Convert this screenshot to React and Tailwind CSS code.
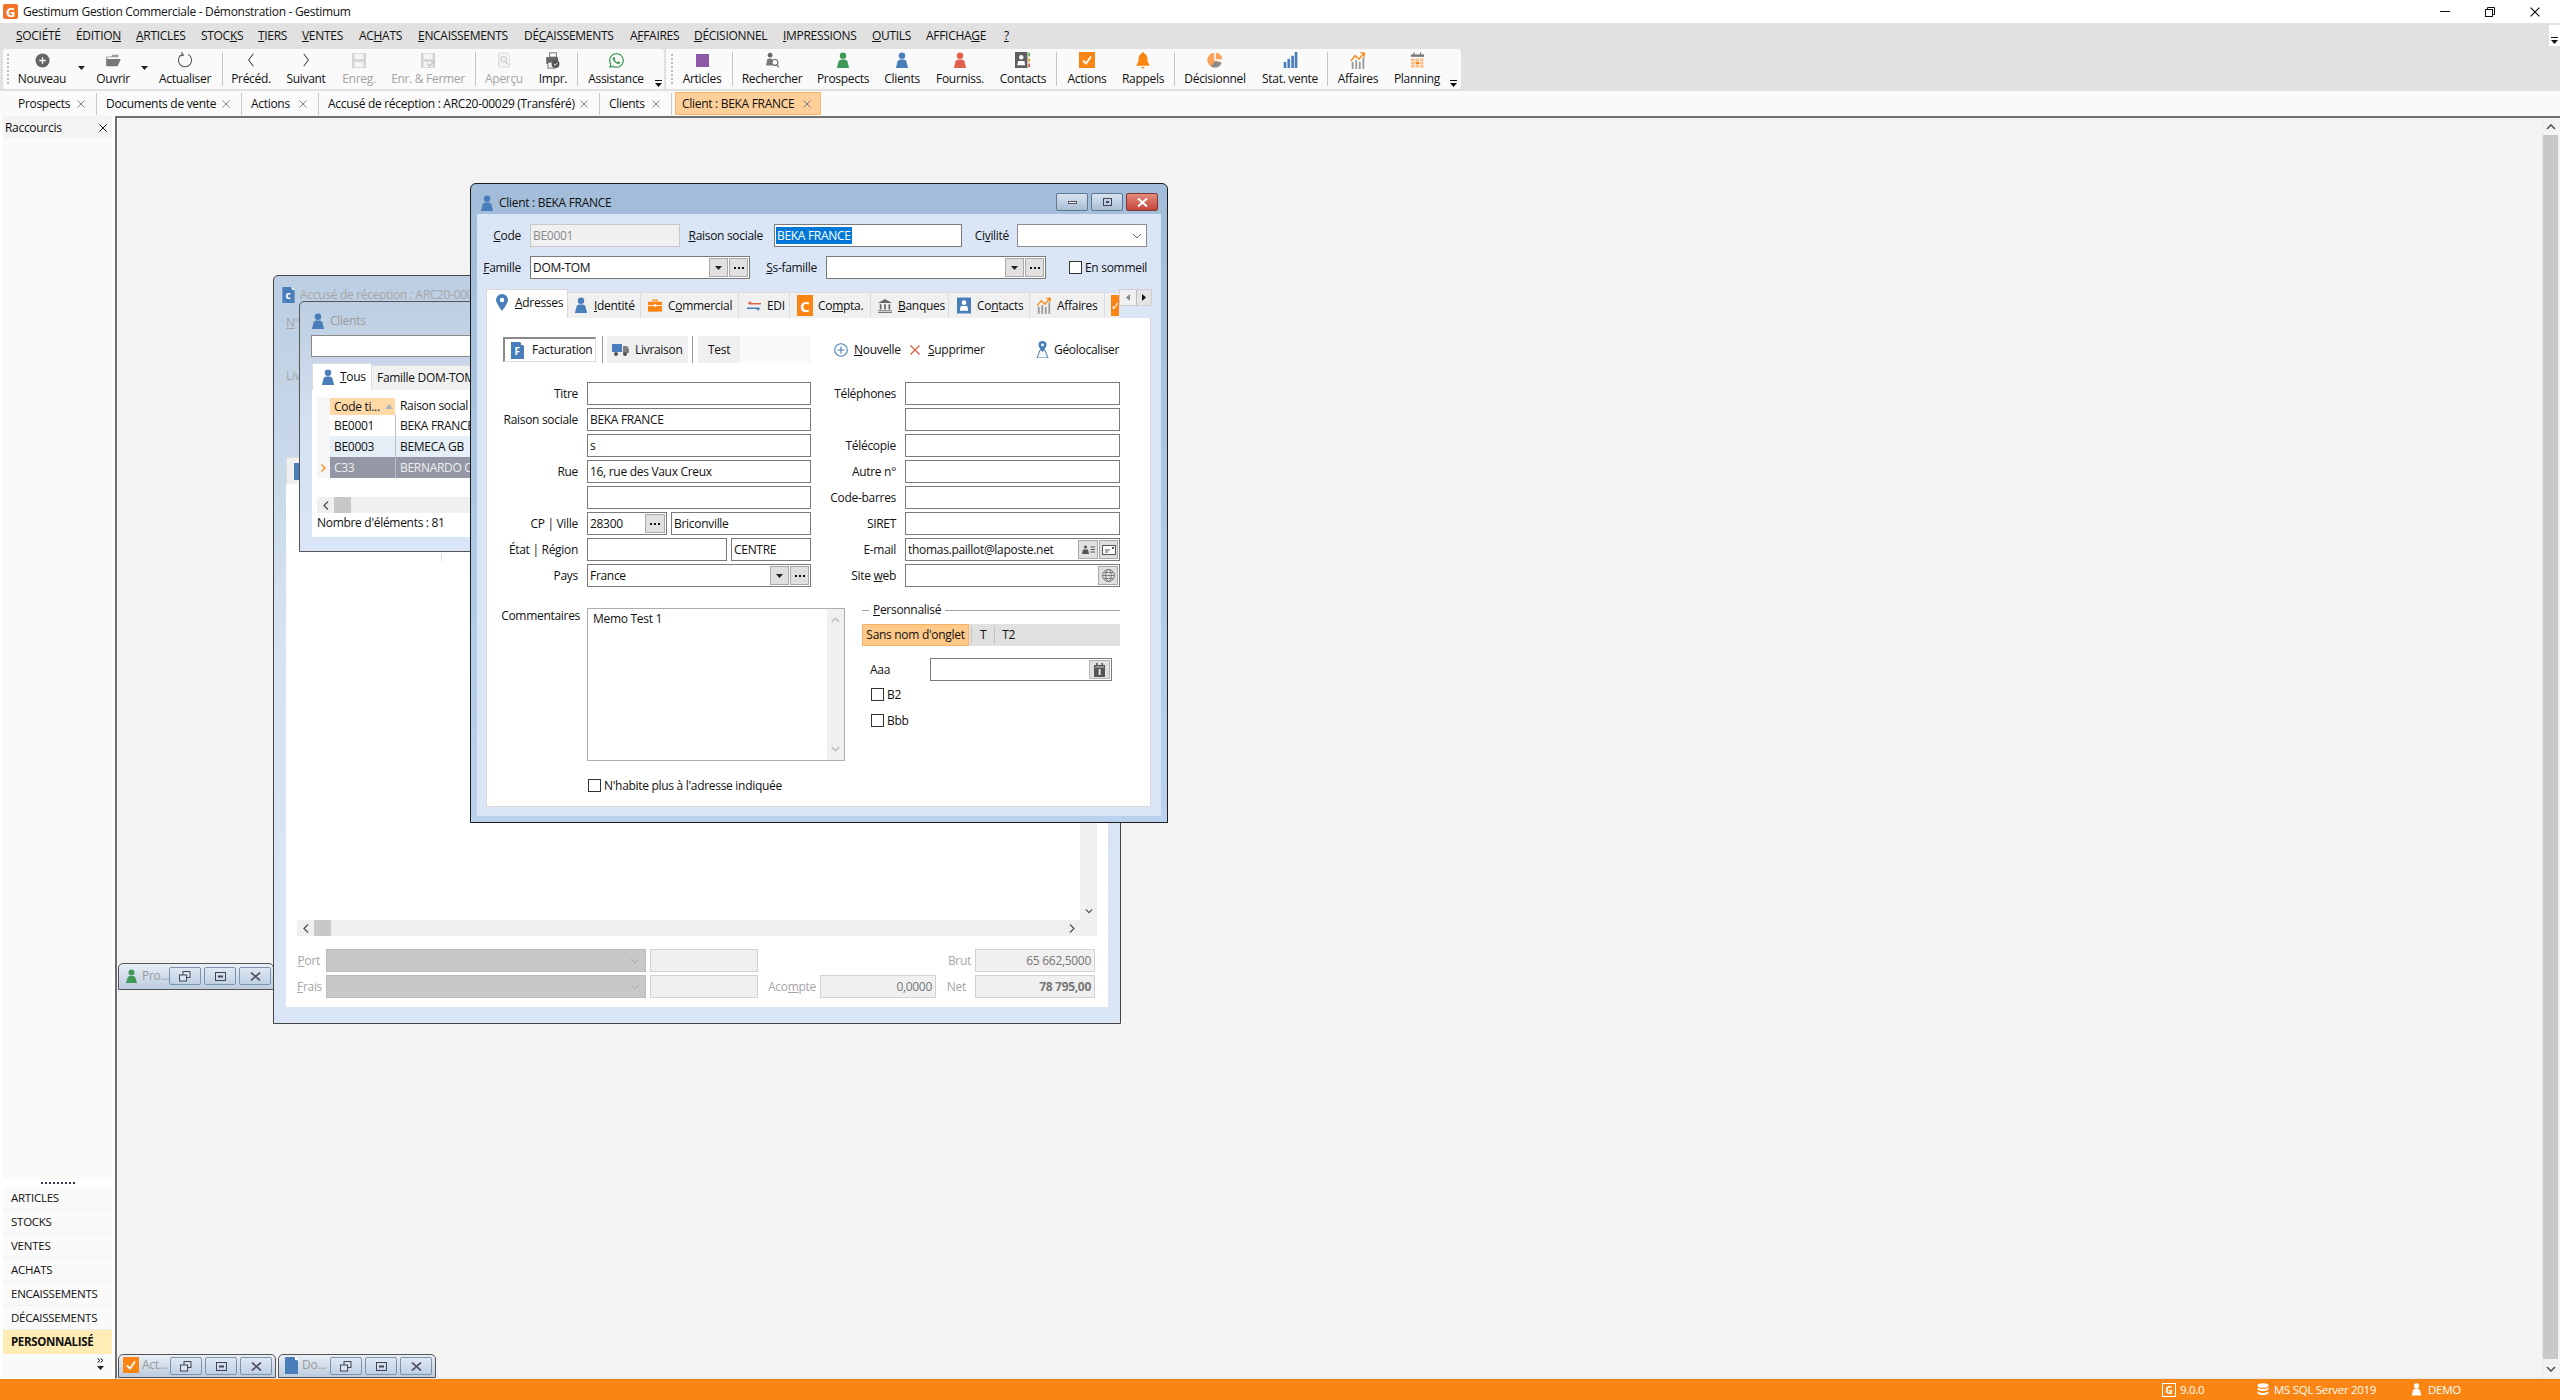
import React from "react";
import { FaWhatsapp } from "react-icons/fa";

const Person = ({ c = "#4a7ebb", s = 16 }) => (
  <svg width={s} height={s * 1.15} viewBox="0 0 16 18"><circle cx="8" cy="4" r="3.7" fill={c} /><path d="M1 18 L3 10.5 Q4 8.5 6 8.3 L10 8.3 Q12 8.5 13 10.5 L15 18 Z" fill={c} /></svg>
);
const ChevL = () => <svg width="8" height="14" viewBox="0 0 10 18"><path d="M8 1 L2 9 L8 17" fill="none" stroke="#444" strokeWidth="1.3" /></svg>;
const ChevR = () => <svg width="8" height="14" viewBox="0 0 10 18"><path d="M2 1 L8 9 L2 17" fill="none" stroke="#444" strokeWidth="1.3" /></svg>;
const Floppy = ({ check }) => (
  <svg width="16" height="15" viewBox="0 0 18 17"><path d="M1 0 H17 V17 H1 Z" fill="#d5d5d5" /><rect x="4" y="1" width="10" height="6" fill="#f4f4f4" /><rect x="4" y="10" width="10" height="6" fill="#f4f4f4" />{check && <path d="M8 12 l3 3 l6 -7" stroke="#c4c4c4" strokeWidth="1.6" fill="none" />}</svg>
);
const Plus = () => <svg width="15" height="15" viewBox="0 0 16 16"><circle cx="8" cy="8" r="7.5" fill="#666" /><path d="M8 4.5 V11.5 M4.5 8 H11.5" stroke="#fff" strokeWidth="1.4" /></svg>;
const Folder = () => <svg width="17" height="13" viewBox="0 0 20 16"><path d="M1 3 H7 L9 1 H16 V4 H1 Z" fill="#999" /><path d="M1 15 L1 4 L3 6 H19 L15 15 Z" fill="#777" /></svg>;
const Refresh = () => <svg width="16" height="16" viewBox="0 0 20 20"><path d="M6 3 A8.2 8.2 0 1 0 14 3" fill="none" stroke="#555" strokeWidth="1.3" /><path d="M5.5 0 L8 4 L3.5 5" fill="none" stroke="#555" strokeWidth="1.3" /></svg>;
const Preview = () => <svg width="14" height="16" viewBox="0 0 18 20"><path d="M2 1 H13 L16 4 V19 H2 Z" fill="#f4f4f4" stroke="#d3d3d3" /><circle cx="8.5" cy="9" r="3.5" fill="none" stroke="#c9c9c9" strokeWidth="1.3" /><path d="M11 12 L14 16" stroke="#c9c9c9" strokeWidth="1.5" /></svg>;
const Printer = () => <svg width="16" height="17" viewBox="0 0 18 20"><rect x="5" y="1" width="8" height="5" fill="none" stroke="#666" /><rect x="1" y="6" width="14" height="8" fill="#666" /><rect x="3" y="12" width="9" height="7" fill="#eee" stroke="#666" /><circle cx="12" cy="14" r="4.6" fill="#555" /><path d="M10 14 l1.6 1.6 l2.6 -3" stroke="#fff" fill="none" /></svg>;
const Purple = () => <div className="w-[13px] h-[13px] bg-[#8e5aa8]" />;
const Search = () => <svg width="15" height="16" viewBox="0 0 18 20"><circle cx="6" cy="4" r="3" fill="#666" /><path d="M1 17 L2.5 9 Q6 7 9 9 L9 17 Z" fill="#777" /><circle cx="12" cy="13" r="3.7" fill="#fff" stroke="#666" strokeWidth="1.3" /><path d="M14.5 16 L17 19" stroke="#666" strokeWidth="1.5" /></svg>;
const ContactCard = () => <svg width="16" height="16" viewBox="0 0 18 18"><rect x="0" y="0" width="14" height="18" fill="#5f5f5f" /><circle cx="7" cy="6" r="2.5" fill="#fff" /><path d="M2.5 15 L3.5 10 H10.5 L11.5 15 Z" fill="#fff" /><rect x="15" y="1" width="2" height="4" fill="#4caf50" /><rect x="15" y="7" width="2" height="4" fill="#e0a030" /><rect x="15" y="13" width="2" height="4" fill="#d9534f" /></svg>;
const ActionBox = ({ s = 16 }) => <svg width={s} height={s} viewBox="0 0 16 16"><rect width="16" height="16" fill="#fb8513" /><path d="M4 8.5 L7 11.5 L12 4.5" stroke="#fff" strokeWidth="1.8" fill="none" /></svg>;
const Bell = () => <svg width="14" height="17" viewBox="0 0 17 21"><path d="M8.5 0 Q10 0 10 2 Q14 3.5 14 9 Q14 13 16.5 16 V17 H.5 V16 Q3 13 3 9 Q3 3.5 7 2 Q7 0 8.5 0Z" fill="#fb8513" /><path d="M6.5 18.5 H10.5 Q10 20.5 8.5 20.5 Q7 20.5 6.5 18.5Z" fill="#fb8513" /></svg>;
const Pie = () => <svg width="16" height="16" viewBox="0 0 20 20"><path d="M9 1 A9 9 0 1 0 18 12.5 L9 10.5 Z" fill="#f7a35c" /><path d="M11 0.5 A9 9 0 0 1 19 9 L11 9 Z" fill="#f7a35c" /><path d="M10 11.5 L18.5 13.3 A9 9 0 0 1 5 18 Z" fill="#8c8c8c" /></svg>;
const Bars = () => <svg width="15" height="16" viewBox="0 0 18 21"><rect x="0" y="13" width="3.5" height="8" fill="#4a7ebb" /><rect x="5" y="9" width="3.5" height="12" fill="#4a7ebb" /><rect x="10" y="5" width="3.5" height="16" fill="#4a7ebb" /><rect x="14.5" y="0" width="3.5" height="21" fill="#4a7ebb" /></svg>;
const Trend = () => <svg width="16" height="17" viewBox="0 0 16 19"><rect x="1" y="11" width="2" height="8" fill="#999" /><rect x="5" y="9" width="2" height="10" fill="#999" /><rect x="9" y="11" width="2" height="8" fill="#999" /><rect x="13" y="6" width="2" height="13" fill="#999" /><path d="M0 10 L5 4 L9 8 L14.5 1.5 M10.5 1 H15 V5.5" stroke="#fb8513" strokeWidth="1.5" fill="none" /></svg>;
const Planning = () => <svg width="15" height="17" viewBox="0 0 16 21"><path d="M0 3 H16 V6 H0 Z" fill="#777" /><rect x="3" y="0.5" width="1.5" height="4" fill="#777" /><rect x="11" y="0.5" width="1.5" height="4" fill="#777" />
  {[8, 12, 16].map((y) => [0, 5.5, 11].map((x) => <rect key={x + "-" + y} x={x} y={y} width="4.5" height="3.3" fill={y === 12 && x === 5.5 ? "#fb8513" : "#fbc18c"} />))}</svg>;
const Pin = () => <svg width="12" height="17" viewBox="0 0 12 17"><path d="M6 0 A6 6 0 0 1 12 6 Q12 9 6 17 Q0 9 0 6 A6 6 0 0 1 6 0Z" fill="#4a7ebb" /><circle cx="6" cy="6" r="2.2" fill="#fff" /></svg>;
const Briefcase = () => <svg width="17" height="15" viewBox="0 0 17 15"><path d="M6 3 V1 H11 V3" stroke="#fb8513" fill="none" strokeWidth="1.3" /><rect y="3" width="17" height="12" fill="#fb8513" /><rect y="7" width="17" height="1" fill="#fff" /><rect x="7" y="6" width="3" height="3" fill="#fff" /></svg>;
const Edi = () => <svg width="15" height="10" viewBox="0 0 15 10"><path d="M15 2.5 H2 M4 0.5 L1.5 2.5" stroke="#e0604c" strokeWidth="1.6" fill="none" /><path d="M0 7.5 H13 M11 9.5 L13.5 7.5" stroke="#4a7ebb" strokeWidth="1.6" fill="none" /></svg>;
const Bank = () => <svg width="16" height="16" viewBox="0 0 16 16"><path d="M8 0 L16 4.5 H0 Z" fill="#666" /><rect x="2" y="6" width="2" height="6" fill="#666" /><rect x="7" y="6" width="2" height="6" fill="#666" /><rect x="12" y="6" width="2" height="6" fill="#666" /><rect y="13" width="16" height="1" fill="#666" /><rect y="15" width="16" height="1" fill="#666" /></svg>;
const BlueContact = () => <svg width="15" height="17" viewBox="0 0 15 17"><rect width="15" height="17" fill="#4a7ebb" /><circle cx="7.5" cy="5.5" r="2.5" fill="#fff" /><path d="M3 14 L4 9 H11 L12 14 Z" fill="#fff" /></svg>;
const Doc = ({ t, w = 13, h = 17, fs = 10 }) => <svg width={w} height={h} viewBox="0 0 13 17"><path d="M0 0 H9 L13 4 V17 H0 Z" fill="#4a7ebb" /><path d="M10 0 L13 3 H10 Z" fill="#fff" />{t && <text x="6" y="13" fontSize={fs} fill="#fff" textAnchor="middle" fontWeight="700">{t}</text>}</svg>;
const Truck = () => <svg width="17" height="13" viewBox="0 0 17 13"><rect y="1" width="10" height="8" fill="#4a7ebb" /><path d="M11 3 H15 L17 6 V10 H11 Z" fill="#7f7f7f" /><circle cx="4" cy="11" r="2" fill="#555" /><circle cx="13" cy="11" r="2" fill="#555" /></svg>;
const PlusCircle = () => <svg width="14" height="14" viewBox="0 0 14 14"><circle cx="7" cy="7" r="6.3" fill="none" stroke="#4a7ebb" strokeWidth="1.1" /><path d="M7 3.5 V10.5 M3.5 7 H10.5" stroke="#4a7ebb" strokeWidth="1.1" /></svg>;
const RedX = () => <svg width="10" height="10" viewBox="0 0 10 10"><path d="M0.5 0.5 L9.5 9.5 M9.5 0.5 L0.5 9.5" stroke="#e0604c" strokeWidth="1.4" /></svg>;
const Geo = () => <svg width="15" height="17" viewBox="0 0 15 17"><path d="M2 17 L5 9 H10 L13 17 Z" fill="#f5f8fc" stroke="#4a7ebb" /><path d="M7.5 0 A4 4 0 0 1 11.5 4 Q11.5 6 7.5 11 Q3.5 6 3.5 4 A4 4 0 0 1 7.5 0Z" fill="#4a7ebb" /><circle cx="7.5" cy="4" r="1.4" fill="#fff" /></svg>;
const DownTri = ({ c = "#222" }) => <svg width="7" height="4" viewBox="0 0 7 4"><path d="M0 0 H7 L3.5 4 Z" fill={c} /></svg>;
const TinyOver = () => <svg width="7" height="7" viewBox="0 0 7 7"><rect width="7" height="1" fill="#111" /><path d="M0 3 H7 L3.5 7 Z" fill="#111" /></svg>;
const Cv = ({ c = "#666", d = "M1 1 L5 5 L9 1", w = 10, h = 6, sw = 1 }) => <svg width={w} height={h} viewBox="0 0 10 6"><path d={d} fill="none" stroke={c} strokeWidth={sw} /></svg>;
const CloseX = ({ c = "#8a8a8a", s = 8 }) => <svg width={s} height={s} viewBox="0 0 8 8"><path d="M0.5 0.5 L7.5 7.5 M7.5 0.5 L0.5 7.5" stroke={c} strokeWidth="1" /></svg>;

const Dots = () => <span className="flex gap-[2px]"><span className="w-[2px] h-[2px] bg-[#111]" /><span className="w-[2px] h-[2px] bg-[#111]" /><span className="w-[2px] h-[2px] bg-[#111]" /></span>;
const MiniBtn = ({ w = 19, h = 19, children }) => <span className="flex items-center justify-center bg-[#e0e0e0] border border-[#a9a9a9] shrink-0" style={{ width: w, height: h }}>{children}</span>;
const Grip = () => <div className="w-[2px] h-[30px] mx-[2px] self-center border-l-2 border-dotted border-[#bdbdbd]" />;

const menu = [
  [60, <><u>S</u>OCIÉTÉ</>], [60, <>ÉDITIO<u>N</u></>], [65, <><u>A</u>RTICLES</>], [57, <>STOC<u>K</u>S</>], [44, <><u>T</u>IERS</>], [57, <><u>V</u>ENTES</>], [59, <>AC<u>H</u>ATS</>], [106, <><u>E</u>NCAISSEMENTS</>], [106, <>DÉ<u>C</u>AISSEMENTS</>], [64, <>A<u>F</u>FAIRES</>], [89, <><u>D</u>ÉCISIONNEL</>], [89, <><u>I</u>MPRESSIONS</>], [54, <><u>O</u>UTILS</>], [78, <>AFFICHA<u>G</u>E</>], [20, <u>?</u>],
];

const TB = ({ w, label, icon, off }) => (
  <div className={`flex flex-col items-center h-full shrink-0 ${off ? "text-[#a3a3a3]" : "text-[#111]"}`} style={{ width: w }}>
    <div className="h-[22px] shrink-0 flex items-center justify-center">{icon}</div>
    <div className="leading-[16px] whitespace-nowrap">{label}</div>
  </div>
);
const Arrow = ({ w }) => <div className="flex items-center justify-center h-full shrink-0 pb-[2px]" style={{ width: w }}><DownTri /></div>;
const Sep = ({ w }) => <div className="flex justify-center items-center h-full shrink-0" style={{ width: w }}><div className="w-[1px] h-[34px] bg-[#c4c4c4]" /></div>;
const Over = ({ w }) => <div className="flex items-end justify-center h-full shrink-0 pb-[2px]" style={{ width: w }}><TinyOver /></div>;

const DocTab = ({ w, label }) => (
  <div className="flex items-center h-full shrink-0" style={{ width: w }}>
    <span className="whitespace-nowrap">{label}</span>
    <span className="ml-auto mr-[11px]"><CloseX /></span>
  </div>
);
const TabSep = () => <div className="w-[1px] h-[22px] bg-[#c9c9c9] mr-[9px] shrink-0" />;

const MinBtns = () => (
  <div className="flex gap-[3px] ml-auto">
    <span className="w-[32px] h-[18px] flex items-center justify-center bg-gradient-to-b from-[#dfe8f3] to-[#bfd0e4] border border-[#7f93ab] rounded-[2px]"><svg width="12" height="11" viewBox="0 0 12 11"><rect x="4" y=".5" width="7" height="6" fill="none" stroke="#445" /><rect x=".5" y="4" width="7" height="6" fill="#dbe5f1" stroke="#445" /></svg></span>
    <span className="w-[32px] h-[18px] flex items-center justify-center bg-gradient-to-b from-[#dfe8f3] to-[#bfd0e4] border border-[#7f93ab] rounded-[2px]"><svg width="11" height="9" viewBox="0 0 11 9"><rect x=".5" y=".5" width="10" height="8" fill="none" stroke="#445" /><rect x="3" y="3.5" width="5" height="2" fill="#445" /></svg></span>
    <span className="w-[32px] h-[18px] flex items-center justify-center bg-gradient-to-b from-[#dfe8f3] to-[#bfd0e4] border border-[#7f93ab] rounded-[2px]"><svg width="11" height="9" viewBox="0 0 11 9"><path d="M1 0.5 L10 8.5 M10 0.5 L1 8.5" stroke="#556" strokeWidth="1.7" /></svg></span>
  </div>
);
const MinWin = ({ className, icon, label }) => (
  <div className={`absolute h-[27px] rounded-t-[5px] border border-[#555] bg-gradient-to-b from-[#e8eef6] to-[#bccddf] flex items-center pl-[4px] pr-[3px] pt-[2px] pb-[3px] ${className}`}>
    <span className="w-[16px] flex justify-center shrink-0">{icon}</span>
    <span className="ml-[3px] text-[#9a9a9a] whitespace-nowrap">{label}</span>
    <MinBtns />
  </div>
);

const Fld = ({ w, children, cls = "" }) => (
  <div className={`h-[23px] border border-[#7a7a7a] bg-white flex items-center shrink-0 text-[#111] ${cls}`} style={{ width: w }}>{children}</div>
);
const Txt = ({ children }) => <span className="pl-[2px] whitespace-nowrap leading-[17px]">{children}</span>;
const Lbl = ({ w, pr, children, cls = "" }) => <div className={`text-right shrink-0 text-[#111] whitespace-nowrap ${cls}`} style={{ width: w, paddingRight: pr }}>{children}</div>;

const Tab = ({ w, pl, icon, children }) => (
  <div className="h-[26px] shrink-0 bg-[#f0f0f0] border-t border-r border-[#dcdcdc] flex items-center text-[#111] overflow-hidden" style={{ width: w, paddingLeft: pl }}>
    <span className="w-[14px] flex justify-center shrink-0">{icon}</span>
    <span className="ml-[6px] whitespace-nowrap">{children}</span>
  </div>
);
const Check = ({ label, cls = "" }) => (
  <div className={`flex items-center ${cls}`}>
    <span className="w-[13px] h-[13px] border border-[#333] bg-white shrink-0" />
    <span className="ml-[3px] whitespace-nowrap text-[#111]">{label}</span>
  </div>
);

const leftRows = [
  ["Titre"], ["Raison sociale", "BEKA FRANCE"], ["", "s"], ["Rue", "16, rue des Vaux Creux"], [""],
];
const rightRows = ["Téléphones", "", "Télécopie", "Autre n°", "Code-barres", "SIRET"];
const sideItems = ["ARTICLES", "STOCKS", "VENTES", "ACHATS", "ENCAISSEMENTS", "DÉCAISSEMENTS"];

function ClientWindow() {
  return (
    <div className="absolute left-[353px] top-[65px] w-[698px] h-[640px] border border-[#1c1c1c] rounded-t-[6px] overflow-hidden bg-gradient-to-b from-[#a2bcd9] to-[#bad2ed] flex flex-col px-[6px] pb-[6px]">
      <div className="h-[30px] shrink-0 flex items-center pt-[8px]">
        <span className="ml-[2px] w-[16px] flex justify-center"><Person s={14} /></span>
        <span className="ml-[4px] text-[#111] whitespace-nowrap">Client : BEKA FRANCE</span>
        <div className="ml-auto flex gap-[3px] mr-[3px] mb-[2px]">
          <span className="w-[32px] h-[18px] rounded-[2px] border border-[#5f7590] bg-gradient-to-b from-[#d9e4f0] to-[#a9bdd4] flex items-center justify-center"><span className="w-[9px] h-[3px] bg-white border border-[#556]" /></span>
          <span className="w-[32px] h-[18px] rounded-[2px] border border-[#5f7590] bg-gradient-to-b from-[#d9e4f0] to-[#a9bdd4] flex items-center justify-center"><span className="w-[9px] h-[8px] border border-[#445] flex items-center justify-center"><span className="w-[3px] h-[2px] bg-[#445]" /></span></span>
          <span className="w-[32px] h-[18px] rounded-[2px] border border-[#7a3a33] bg-gradient-to-b from-[#e58a7d] to-[#c2443a] flex items-center justify-center"><svg width="11" height="9" viewBox="0 0 11 9"><path d="M1 0.5 L10 8.5 M10 0.5 L1 8.5" stroke="#fff" strokeWidth="2" /></svg></span>
        </div>
      </div>
      <div className="flex-1 bg-[#dae6f6] flex flex-col pt-[10px]">
        <div className="flex items-center h-[23px]">
          <Lbl w={53} pr={9}><u>C</u>ode</Lbl>
          <Fld w={150} cls="!bg-[#f0f0f0] !border-[#c8c8c8] !text-[#8a8a8a]"><Txt>BE0001</Txt></Fld>
          <Lbl w={94} pr={11}><u>R</u>aison sociale</Lbl>
          <Fld w={188}><span className="ml-[1px] bg-[#0078d7] text-white px-[1px] whitespace-nowrap leading-[17px]">BEKA FRANCE</span></Fld>
          <Lbl w={55} pr={8}>Ci<u>v</u>ilité</Lbl>
          <Fld w={130} cls="!border-[#8c8c8c] justify-end pr-[4px]"><Cv /></Fld>
        </div>
        <div className="flex items-center h-[23px] mt-[9px]">
          <Lbl w={53} pr={9}><u>F</u>amille</Lbl>
          <Fld w={220} cls="pr-[1px] gap-[1px]"><Txt>DOM-TOM</Txt><span className="ml-auto" /><MiniBtn><DownTri /></MiniBtn><MiniBtn><Dots /></MiniBtn></Fld>
          <Lbl w={76} pr={9}><u>S</u>s-famille</Lbl>
          <Fld w={220} cls="pr-[1px] gap-[1px]"><span className="ml-auto" /><MiniBtn><DownTri /></MiniBtn><MiniBtn><Dots /></MiniBtn></Fld>
          <Check cls="ml-[23px]" label="En sommeil" />
        </div>
        <div className="flex items-end h-[29px] mt-[10px] ml-[9px] relative z-10">
          <div className="w-[82px] h-[29px] shrink-0 bg-white border-t border-l border-r border-[#d9d9d9] flex items-center pl-[8px] pb-[3px] text-[#111]">
            <span className="w-[14px] flex justify-center"><Pin /></span><span className="ml-[6px]"><u>A</u>dresses</span>
          </div>
          <Tab w={73} pl={6} icon={<Person s={14} />}><u>I</u>dentité</Tab>
          <Tab w={98} pl={7} icon={<Briefcase />}>C<u>o</u>mmercial</Tab>
          <Tab w={51} pl={8} icon={<Edi />}>EDI</Tab>
          <Tab w={81} pl={8} icon={<span className="w-[16px] h-[21px] bg-[#fb8513] text-white text-[15px] font-bold flex items-center justify-center shrink-0">C</span>}>Co<u>m</u>pta.</Tab>
          <Tab w={78} pl={7} icon={<Bank />}><u>B</u>anques</Tab>
          <Tab w={81} pl={8} icon={<BlueContact />}>Co<u>n</u>tacts</Tab>
          <Tab w={75} pl={7} icon={<Trend />}>Affaires</Tab>
          <div className="w-[14px] h-[26px] shrink-0 bg-[#f0f0f0] border-t border-[#dcdcdc] pl-[6px] flex items-center overflow-hidden"><span className="w-[9px] h-[21px] bg-[#fb8513] flex items-center text-white text-[11px]">✓</span></div>
          <div className="absolute left-[633px] top-0 w-[33px] h-[17px] flex bg-[#f0f0f0] border border-[#cfcfcf]">
            <span className="w-[16px] flex items-center justify-center"><svg width="4" height="7" viewBox="0 0 4 7"><path d="M4 0 V7 L0 3.5 Z" fill="#888" /></svg></span>
            <span className="flex-1 flex items-center justify-center bg-[#e4e4e4] border-l border-[#bbb]"><svg width="4" height="7" viewBox="0 0 4 7"><path d="M0 0 V7 L4 3.5 Z" fill="#111" /></svg></span>
          </div>
        </div>
        <div className="ml-[9px] w-[665px] h-[489px] bg-white border border-t-0 border-[#d9d9d9] shrink-0 flex flex-col">
          <div className="flex items-center h-[27px] mt-[18px] ml-[16px]">
            <div className="w-[93px] h-[25px] border-t-2 border-l-2 border-[#8a8a8a] border-r border-b border-r-[#ddd] border-b-[#ddd] flex items-center pl-[6px] text-[#111]"><Doc t="F" /><span className="ml-[8px]">Facturation</span></div>
            <div className="w-[1px] h-[27px] bg-[#9a9a9a] ml-[6px]" />
            <div className="w-[81px] h-[27px] bg-[#f0f0f0] ml-[4px] flex items-center pl-[5px] text-[#111]"><Truck /><span className="ml-[6px]">Livraison</span></div>
            <div className="w-[1px] h-[27px] bg-[#9a9a9a] ml-[4px]" />
            <div className="w-[42px] h-[27px] bg-[#f0f0f0] ml-[5px] flex items-center pl-[10px] text-[#111]">Test</div>
            <div className="w-[71px] h-[27px] bg-[#f9f9f9]" />
            <span className="ml-[23px] w-[76px] shrink-0 flex items-center"><PlusCircle /><span className="ml-[6px] text-[#111]"><u>N</u>ouvelle</span></span>
            <span className="w-[125px] shrink-0 flex items-center"><RedX /><span className="ml-[8px] text-[#111]"><u>S</u>upprimer</span></span>
            <span className="flex items-center"><Geo /><span className="ml-[4px] text-[#111]">Géolocaliser</span></span>
          </div>
          <div className="flex mt-[19px]">
            <div className="w-[324px] flex flex-col gap-[3px] shrink-0">
              {leftRows.map(([l, v], i) => (
                <div key={i} className="flex items-center"><Lbl w={91} pr={0}>{l}</Lbl><span className="w-[9px]" /><Fld w={224}>{v && <Txt>{v}</Txt>}</Fld></div>
              ))}
              <div className="flex items-center"><Lbl w={91} pr={0}>CP | Ville</Lbl><span className="w-[9px]" />
                <Fld w={80} cls="pr-[1px]"><Txt>28300</Txt><span className="ml-auto"><MiniBtn w={20}><Dots /></MiniBtn></span></Fld>
                <span className="w-[4px]" /><Fld w={140}><Txt>Briconville</Txt></Fld></div>
              <div className="flex items-center"><Lbl w={91} pr={0}>État | Région</Lbl><span className="w-[9px]" />
                <Fld w={140} /><span className="w-[4px]" /><Fld w={80}><Txt>CENTRE</Txt></Fld></div>
              <div className="flex items-center"><Lbl w={91} pr={0}>Pays</Lbl><span className="w-[9px]" />
                <Fld w={224} cls="pr-[1px] gap-[1px]"><Txt>France</Txt><span className="ml-auto" /><MiniBtn><DownTri /></MiniBtn><MiniBtn><Dots /></MiniBtn></Fld></div>
            </div>
            <div className="flex flex-col gap-[3px]">
              {rightRows.map((l, i) => (
                <div key={i} className="flex items-center"><Lbl w={85} pr={0}>{l}</Lbl><span className="w-[9px]" /><Fld w={215} /></div>
              ))}
              <div className="flex items-center"><Lbl w={85} pr={0}>E-mail</Lbl><span className="w-[9px]" />
                <Fld w={215} cls="pr-[1px] gap-[1px]"><Txt>thomas.paillot@laposte.net</Txt><span className="ml-auto" />
                  <MiniBtn w={20}><svg width="13" height="9" viewBox="0 0 13 9"><circle cx="3.5" cy="2" r="1.6" fill="#555" /><path d="M0 9 L1 4.5 H6 L7 9Z" fill="#555" /><path d="M8.5 2 H13 M8.5 4.5 H13 M8.5 7 H13" stroke="#555" /></svg></MiniBtn>
                  <MiniBtn w={19}><svg width="14" height="10" viewBox="0 0 14 10"><rect x=".5" y=".5" width="13" height="9" fill="#fff" stroke="#555" /><path d="M3 5 H8 M3 7 H6" stroke="#555" /><rect x="10" y="2" width="2" height="2" fill="#555" /></svg></MiniBtn></Fld></div>
              <div className="flex items-center"><Lbl w={85} pr={0}>Site <u>w</u>eb</Lbl><span className="w-[9px]" />
                <Fld w={215} cls="pr-[1px]"><span className="ml-auto"><MiniBtn w={20}><svg width="13" height="13" viewBox="0 0 13 13" fill="none" stroke="#666" strokeWidth=".8"><circle cx="6.5" cy="6.5" r="6" /><ellipse cx="6.5" cy="6.5" rx="2.8" ry="6" /><path d="M.5 6.5 H12.5 M1.5 3.5 H11.5 M1.5 9.5 H11.5" /></svg></MiniBtn></span></Fld></div>
            </div>
          </div>
          <div className="flex mt-[16px]">
            <div className="flex pt-[5px] shrink-0">
              <Lbl w={93} pr={0} cls="pt-[0px]">Commentaires</Lbl>
              <span className="w-[7px]" />
              <div className="w-[258px] h-[153px] border border-[#adadad] bg-white flex text-[#111]">
                <span className="flex-1 pl-[5px] pt-[2px]">Memo Test 1</span>
                <div className="w-[17px] bg-[#f0f0f0] flex flex-col items-center justify-between py-[8px]"><Cv c="#bbb" d="M1 5 L5 1 L9 5" sw={1.5} w={9} /><Cv c="#bbb" sw={1.5} w={9} /></div>
              </div>
            </div>
            <div className="ml-[17px] w-[258px] flex flex-col">
              <div className="h-[14px] flex items-center"><span className="w-[7px] h-[1px] bg-[#a0a0a0]" /><span className="mx-[4px] text-[#111]"><u>P</u>ersonnalisé</span><span className="flex-1 h-[1px] bg-[#a0a0a0]" /></div>
              <div className="h-[22px] mt-[7px] bg-[#e0e0e0] flex items-center text-[#111]">
                <span className="w-[107px] h-[22px] bg-[#ffc98a] border border-[#f7b26a] flex items-center justify-center whitespace-nowrap">Sans nom d'onglet</span>
                <span className="w-[1px] h-[18px] bg-[#c4c4c4] ml-[2px]" /><span className="ml-[8px]">T</span>
                <span className="w-[1px] h-[18px] bg-[#c4c4c4] ml-[8px]" /><span className="ml-[7px]">T2</span>
              </div>
              <div className="flex items-center mt-[12px] h-[23px] pl-[8px] text-[#111]">
                <span className="w-[60px]">Aaa</span>
                <Fld w={182} cls="justify-end pr-[1px]"><span className="w-[21px] h-[19px] bg-[#e0e0e0] border border-[#b4b4b4] flex items-center justify-center"><svg width="11" height="14" viewBox="0 0 11 14"><rect y="2" width="11" height="12" fill="#555" /><rect x="2" y="0" width="1.5" height="3" fill="#555" /><rect x="7.5" y="0" width="1.5" height="3" fill="#555" /><rect x="1" y="3.6" width="9" height=".8" fill="#eee" /><rect x="4.7" y="6" width="1.8" height="6" fill="#eee" /></svg></span></Fld>
              </div>
              <Check cls="ml-[9px] mt-[7px] h-[13px]" label="B2" />
              <Check cls="ml-[9px] mt-[13px] h-[13px]" label="Bbb" />
            </div>
          </div>
          <Check cls="ml-[101px] mt-[18px] h-[13px]" label="N'habite plus à l'adresse indiquée" />
        </div>
      </div>
    </div>
  );
}

function ClientsWindow() {
  return (
    <div className="absolute left-[182px] top-[183px] w-[400px] h-[251px] border border-[#555] rounded-t-[5px] overflow-hidden bg-gradient-to-b from-[#bccee2] via-[#d4e1f1] to-[#dae6f5] flex flex-col">
      <div className="h-[28px] flex items-center shrink-0 pl-[11px] pt-[10px]"><Person s={14} /><span className="ml-[5px] text-[#9a9a9a]">Clients</span></div>
      <div className="ml-[11px] mt-[5px] h-[22px] w-[300px] bg-white border border-[#8a8a8a] shrink-0" />
      <div className="flex mt-[6px] ml-[12px] h-[27px] shrink-0">
        <div className="w-[60px] h-[27px] bg-white border-t border-l border-r border-[#ddd] flex items-center pl-[8px] text-[#111]"><Person s={14} /><span className="ml-[5px]"><u>T</u>ous</span></div>
        <div className="h-[25px] mt-[2px] w-[200px] bg-[#f0f0f0] border-t border-[#ddd] flex items-center pl-[5px] text-[#111] whitespace-nowrap">Famille DOM-TOM</div>
      </div>
      <div className="ml-[12px] w-[360px] h-[147px] bg-white shrink-0 pl-[5px] pt-[8px] flex flex-col text-[#111]">
        <div className="flex h-[17px]">
          <span className="w-[13px] bg-[#f6f6f6]" />
          <span className="w-[65px] bg-[#ffd9a6] flex items-center pl-[4px] whitespace-nowrap">Code ti...<svg className="ml-auto mr-[2px]" width="8" height="5" viewBox="0 0 8 5"><path d="M4 0 L8 5 H0Z" fill="#b3b3b3" /></svg></span>
          <span className="pl-[5px] whitespace-nowrap">Raison social</span>
        </div>
        {[["BE0001", "BEKA FRANCE", "bg-white text-[#111]"], ["BE0003", "BEMECA GB", "bg-[#e6eef7] text-[#111]"], ["C33", "BERNARDO C", "bg-[#9497a6] text-[#eee]"]].map(([a, b, c], i) => (
          <div key={a} className="flex h-[21px] items-center">
            <span className="w-[13px] h-full bg-[#f6f6f6] flex items-center justify-center">{i === 2 && <svg width="5" height="8" viewBox="0 0 5 8"><path d="M.5 .5 L4 4 L.5 7.5" fill="none" stroke="#fb8513" strokeWidth="1.3" /></svg>}</span>
            <span className={`w-[66px] h-full flex items-center pl-[4px] border-r border-[#bdbdbd] ${c}`}>{a}</span>
            <span className={`flex-1 h-full flex items-center pl-[4px] whitespace-nowrap ${c}`}>{b}</span>
          </div>
        ))}
        <div className="h-[16px] mt-[19px] bg-[#f0f0f0] flex items-center">
          <span className="w-[17px] flex justify-center"><svg width="6" height="9" viewBox="0 0 6 9"><path d="M5 .5 L1 4.5 L5 8.5" fill="none" stroke="#555" strokeWidth="1.4" /></svg></span>
          <span className="w-[17px] h-full bg-[#c8c8c8]" />
        </div>
        <div className="mt-[2px] whitespace-nowrap">Nombre d'éléments : 81</div>
      </div>
    </div>
  );
}

function AccuseWindow() {
  const grey = "text-[#a6a6a6]";
  const Box = ({ w, v, b }) => (
    <div className={`h-[23px] bg-[#f0f0f0] border border-[#d2d2d2] shrink-0 flex items-center justify-end pr-[3px] text-[#777] ${b ? "font-bold" : ""}`} style={{ width: w }}>{v}</div>
  );
  const Sel = () => <div className="w-[320px] h-[23px] bg-[#c8c8c8] border border-[#bcbcbc] shrink-0 flex items-center justify-end pr-[5px]"><Cv c="#a9a9a9" /></div>;
  return (
    <div className="absolute left-[156px] top-[157px] w-[848px] h-[749px] border border-[#444] rounded-t-[5px] overflow-hidden bg-gradient-to-b from-[#bccee2] via-[#d6e3f2] to-[#dae6f5] flex flex-col px-[12px] pb-[16px]">
      <div className="h-[26px] shrink-0 flex items-center -ml-[4px] pt-[12px]"><Doc t="c" w={13} h={16} fs={11} /><span className={`ml-[5px] ${grey} whitespace-nowrap`}>Accusé de réception : ARC20-00029 (Transféré)</span></div>
      <div className={`mt-[13px] h-[18px] shrink-0 ${grey}`}><u>N</u>°</div>
      <div className={`mt-[35px] h-[18px] shrink-0 ${grey}`}>Liv</div>
      <div className="mt-[71px] h-[27px] w-[80px] bg-[#f0f0f0] border-t border-l border-[#ddd] shrink-0 flex items-center pl-[7px]"><span className="w-[7px] h-[17px] bg-[#4a7ebb]" /></div>
      <div className="flex-1 bg-white flex flex-col px-[11px]">
        <div className="flex-1 flex">
          <div className="flex-1">
            <div className="flex mt-[69px] h-[8px]"><span className="ml-[79px] w-[66px] border-r border-[#d9d9d9]" /><span className="w-[66px] border-r border-[#d9d9d9]" /></div>
          </div>
          <div className="w-[17px] bg-[#f0f0f0] flex flex-col justify-end items-center pb-[6px]"><Cv c="#555" w={8} sw={1.6} /></div>
        </div>
        <div className="h-[16px] bg-[#f0f0f0] flex items-center shrink-0">
          <span className="w-[17px] flex justify-center"><svg width="6" height="9" viewBox="0 0 6 9"><path d="M5 .5 L1 4.5 L5 8.5" fill="none" stroke="#555" strokeWidth="1.3" /></svg></span>
          <span className="w-[17px] h-full bg-[#c8c8c8]" />
          <span className="ml-auto mr-[22px]"><svg width="6" height="9" viewBox="0 0 6 9"><path d="M1 .5 L5 4.5 L1 8.5" fill="none" stroke="#555" strokeWidth="1.3" /></svg></span>
        </div>
        <div className="flex items-center mt-[13px] h-[23px]">
          <Lbl w={29} pr={6} cls={`!text-[#a6a6a6]`}><u>P</u>ort</Lbl><Sel /><span className="w-[4px]" /><Box w={108} />
          <span className="w-[191px] text-right pr-[4px] text-[#a6a6a6] ml-[26px]">Brut</span><Box w={120} v="65 662,5000" />
        </div>
        <div className="flex items-center mt-[3px] mb-[9px] h-[23px]">
          <Lbl w={29} pr={6} cls={`!text-[#a6a6a6]`}><u>F</u>rais</Lbl><Sel /><span className="w-[4px]" /><Box w={108} />
          <span className="w-[62px] text-right pr-[4px] text-[#a6a6a6] whitespace-nowrap">Aco<u>m</u>pte</span><Box w={116} v="0,0000" />
          <span className="w-[39px] text-right pr-[9px] text-[#a6a6a6]">Net</span><Box w={120} v="78 795,00" b />
        </div>
      </div>
    </div>
  );
}

export default function App() {
  return (
    <div className="w-[2560px] h-[1400px] overflow-hidden bg-white flex flex-col text-[12px] leading-[16px] tracking-[-0.3px] text-[#111] font-['Open_Sans',sans-serif]">
      <div className="h-[23px] flex items-center shrink-0 relative">
        <span className="ml-[3px] w-[15px] h-[15px] rounded-[2px] bg-[#f0742a] text-white text-[13px] font-bold flex items-center justify-center">G</span>
        <span className="ml-[5px] whitespace-nowrap">Gestimum Gestion Commerciale - Démonstration - Gestimum</span>
        <div className="ml-auto flex items-center">
          <span className="w-[10px] h-[1px] bg-[#111]" />
          <svg className="ml-[35px]" width="10" height="10" viewBox="0 0 10 10" fill="none" stroke="#111"><rect x=".5" y="2.5" width="7" height="7" fill="#fff" /><path d="M2.5 2.5 V.5 H9.5 V7.5 H7.5" /></svg>
          <span className="ml-[35px] mr-[20px]"><CloseX c="#111" s={10} /></span>
        </div>
      </div>
      <div className="h-[68px] bg-[#e1e1e1] shrink-0 flex flex-col">
        <div className="h-[26px] flex items-center pl-[16px] shrink-0">
          {menu.map(([w, l], i) => <div key={i} className="shrink-0 whitespace-nowrap" style={{ width: w }}>{l}</div>)}
          <div className="ml-auto w-[11px] h-[21px] bg-white flex items-end justify-center pb-[2px] self-start mt-[2px]"><TinyOver /></div>
        </div>
        <div className="flex h-[40px] pl-[3px] gap-[2px]">
          <div className="w-[661px] h-full bg-[#fafafa] rounded-[3px] flex pl-[2px]">
            <div className="w-[7px] flex items-center"><Grip /></div>
            <TB w={60} label="Nouveau" icon={<Plus />} /><Arrow w={18} />
            <TB w={46} label="Ouvrir" icon={<Folder />} /><Arrow w={16} />
            <TB w={66} label="Actualiser" icon={<Refresh />} /><Sep w={8} />
            <TB w={50} label="Précéd." icon={<ChevL />} />
            <TB w={60} label="Suivant" icon={<ChevR />} />
            <TB w={46} label="Enreg." off icon={<Floppy />} />
            <TB w={92} label="Enr. & Fermer" off icon={<Floppy check />} /><Sep w={2} />
            <TB w={56} label="Aperçu" off icon={<Preview />} />
            <TB w={42} label="Impr." icon={<Printer />} /><Sep w={6} />
            <TB w={72} label="Assistance" icon={<FaWhatsapp size={17} color="#3f9a5a" />} /><Over w={12} />
          </div>
          <div className="w-[795px] h-full bg-[#fafafa] rounded-[3px] flex pl-[3px]">
            <div className="w-[7px] flex items-center"><Grip /></div>
            <TB w={52} label="Articles" icon={<Purple />} /><Sep w={8} />
            <TB w={72} label="Rechercher" icon={<Search />} />
            <TB w={70} label="Prospects" icon={<Person c="#3f9a5a" s={14} />} />
            <TB w={48} label="Clients" icon={<Person c="#4a7ebb" s={14} />} />
            <TB w={68} label="Fourniss." icon={<Person c="#e0604c" s={14} />} />
            <TB w={58} label="Contacts" icon={<ContactCard />} /><Sep w={8} />
            <TB w={54} label="Actions" icon={<ActionBox s={16} />} />
            <TB w={58} label="Rappels" icon={<Bell />} /><Sep w={4} />
            <TB w={78} label="Décisionnel" icon={<Pie />} />
            <TB w={72} label="Stat. vente" icon={<Bars />} /><Sep w={2} />
            <TB w={60} label="Affaires" icon={<Trend />} />
            <TB w={58} label="Planning" icon={<Planning />} /><Over w={15} />
          </div>
        </div>
      </div>
      <div className="h-[25px] shrink-0 bg-[#fafafa] flex items-center pl-[18px]">
        <DocTab w={78} label="Prospects" /><TabSep />
        <DocTab w={135} label="Documents de vente" /><TabSep />
        <DocTab w={67} label="Actions" /><TabSep />
        <DocTab w={271} label="Accusé de réception : ARC20-00029 (Transféré)" /><TabSep />
        <DocTab w={62} label="Clients" /><TabSep />
        <div className="-ml-[6px] w-[146px] h-[23px] bg-[#ffcf99] border border-[#fbb46e] flex items-center pl-[6px]">
          <span className="whitespace-nowrap">Client : BEKA FRANCE</span><span className="ml-auto mr-[9px]"><CloseX c="#777" /></span>
        </div>
      </div>
      <div className="flex-1 flex min-h-0">
        <div className="w-[115px] shrink-0 bg-white px-[3px] flex flex-col">
          <div className="h-[23px] bg-[#f4f4f4] flex items-center pl-[2px] pr-[5px] mt-[0px] shrink-0"><span className="whitespace-nowrap">Raccourcis</span><span className="ml-auto"><CloseX c="#111" /></span></div>
          <div className="flex-1 bg-[#fafafa]" />
          <div className="h-[7px] bg-white flex items-center justify-center gap-[2px] shrink-0">{[...Array(9)].map((_, i) => <span key={i} className="w-[2px] h-[2px] bg-[#335]" />)}</div>
          {sideItems.map((s) => <div key={s} className="h-[24px] bg-[#fafafa] border-b border-[#f0f0f0] flex items-center pl-[8px] shrink-0 text-[11.5px] tracking-[-0.25px]">{s}</div>)}
          <div className="h-[24px] bg-[#ffedb5] flex items-center pl-[8px] font-bold shrink-0 text-[11.5px] tracking-[-0.35px]">PERSONNALISÉ</div>
          <div className="h-[23px] bg-[#fafafa] flex flex-col items-end pr-[8px] pt-[4px] shrink-0"><svg width="7" height="5" viewBox="0 0 7 5"><path d="M.5 .5 L3 2.5 L.5 4.5 M3.5 .5 L6 2.5 L3.5 4.5" fill="none" stroke="#111" /></svg><span className="mt-[3px]"><DownTri /></span></div>
          <div className="h-[2px] bg-white shrink-0" />
        </div>
        <div className="flex-1 flex border-l-2 border-t-2 border-[#707070] border-b border-b-[#e4e4e4] bg-[#f3f3f3] min-w-0">
          <div className="flex-1 relative overflow-hidden">
            <MinWin className="left-[1px] top-[845px] w-[156px]" icon={<Person c="#3f9a5a" s={13} />} label="Pro..." />
            <AccuseWindow />
            <ClientsWindow />
            <ClientWindow />
            <MinWin className="left-[1px] top-[1236px] w-[158px] !h-[24px] !pb-0 !items-start" icon={<ActionBox />} label="Act..." />
            <MinWin className="left-[161px] top-[1236px] w-[158px] !h-[24px] !pb-0 !items-start" icon={<Doc />} label="Do..." />
          </div>
          <div className="w-[18px] shrink-0 flex flex-col border-l border-[#e9e9e9]">
            <div className="w-[15px] h-[17px] flex items-center justify-center"><Cv c="#555" d="M1 5 L5 1 L9 5" sw={1.6} /></div>
            <div className="w-[15px] h-[1224px] bg-[#c8c8c8]" />
            <div className="w-[15px] flex-1 flex items-center justify-center"><Cv c="#555" sw={1.6} /></div>
          </div>
        </div>
      </div>
      <div className="h-[21px] shrink-0 bg-[#fb8513] text-white flex items-center text-[11.5px]">
        <span className="ml-[2162px] w-[14px] h-[14px] border border-white flex items-center justify-center text-[10px] font-bold">G</span>
        <span className="ml-[4px] w-[24px]">9.0.0</span>
        <span className="ml-[53px]"><svg width="12" height="13" viewBox="0 0 12 13" fill="#fff"><ellipse cx="6" cy="2.5" rx="5.5" ry="2.3" /><path d="M.5 4.5 Q6 7.5 11.5 4.5 V6.5 Q6 9.5 .5 6.5Z" /><path d="M.5 8.5 Q6 11.5 11.5 8.5 V10.5 Q6 13.5 .5 10.5Z" /></svg></span>
        <span className="ml-[5px] w-[99px] whitespace-nowrap">MS SQL Server 2019</span>
        <span className="ml-[38px]"><Person c="#fff" s={11} /></span>
        <span className="ml-[6px]">DEMO</span>
      </div>
    </div>
  );
}
